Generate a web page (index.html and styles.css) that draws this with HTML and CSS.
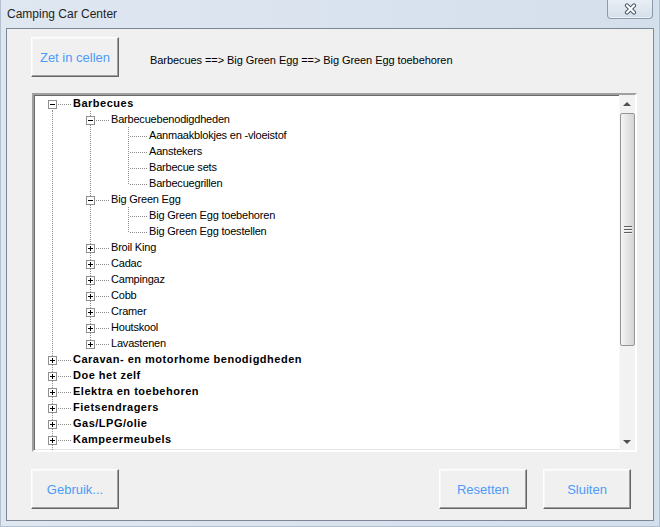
FILE: index.html
```html
<!DOCTYPE html>
<html>
  <head>
    <title>Camping Car Center</title>
    <meta name="viewport" content="width=device-width, initial-scale=1" />
    <link rel="stylesheet" href="styles.css">
  </head>

  <body>
    <div class="window">
      <div class="titlebar">
        <span class="title">Camping Car Center</span>
        <div class="close">
          <svg width="15" height="12" viewBox="0 0 15 12">
            <path d="M4 2.5 L11 9.5 M11 2.5 L4 9.5" stroke="#4b5867" stroke-width="4.2" stroke-linecap="round" fill="none" />
            <path d="M4 2.5 L11 9.5 M11 2.5 L4 9.5" stroke="#ffffff" stroke-width="2.2" stroke-linecap="round" fill="none" />
          </svg>
        </div>
      </div>

      <div class="client">
        <div class="top-row">
          <button class="btn">Zet in cellen</button>
          <span class="path">Barbecues ==&gt; Big Green Egg ==&gt; Big Green Egg toebehoren</span>
        </div>

        <div class="tree-box">
          <div class="tree">
            <div class="row"><span class="cell first"><span class="exp minus"></span></span><span class="label root">Barbecues</span></div>
            <div class="row"><span class="cell pipe"></span><span class="cell tee"><span class="exp minus"></span></span><span class="label">Barbecuebenodigdheden</span></div>
            <div class="row"><span class="cell pipe"></span><span class="cell pipe"></span><span class="cell tee leaf"></span><span class="label">Aanmaakblokjes en -vloeistof</span></div>
            <div class="row"><span class="cell pipe"></span><span class="cell pipe"></span><span class="cell tee leaf"></span><span class="label">Aanstekers</span></div>
            <div class="row"><span class="cell pipe"></span><span class="cell pipe"></span><span class="cell tee leaf"></span><span class="label">Barbecue sets</span></div>
            <div class="row"><span class="cell pipe"></span><span class="cell pipe"></span><span class="cell elbow leaf"></span><span class="label">Barbecuegrillen</span></div>
            <div class="row"><span class="cell pipe"></span><span class="cell tee"><span class="exp minus"></span></span><span class="label">Big Green Egg</span></div>
            <div class="row"><span class="cell pipe"></span><span class="cell pipe"></span><span class="cell tee leaf"></span><span class="label">Big Green Egg toebehoren</span></div>
            <div class="row"><span class="cell pipe"></span><span class="cell pipe"></span><span class="cell elbow leaf"></span><span class="label">Big Green Egg toestellen</span></div>
            <div class="row"><span class="cell pipe"></span><span class="cell tee"><span class="exp plus"></span></span><span class="label">Broil King</span></div>
            <div class="row"><span class="cell pipe"></span><span class="cell tee"><span class="exp plus"></span></span><span class="label">Cadac</span></div>
            <div class="row"><span class="cell pipe"></span><span class="cell tee"><span class="exp plus"></span></span><span class="label">Campingaz</span></div>
            <div class="row"><span class="cell pipe"></span><span class="cell tee"><span class="exp plus"></span></span><span class="label">Cobb</span></div>
            <div class="row"><span class="cell pipe"></span><span class="cell tee"><span class="exp plus"></span></span><span class="label">Cramer</span></div>
            <div class="row"><span class="cell pipe"></span><span class="cell tee"><span class="exp plus"></span></span><span class="label">Houtskool</span></div>
            <div class="row"><span class="cell pipe"></span><span class="cell elbow"><span class="exp plus"></span></span><span class="label">Lavastenen</span></div>
            <div class="row"><span class="cell tee"><span class="exp plus"></span></span><span class="label root">Caravan- en motorhome benodigdheden</span></div>
            <div class="row"><span class="cell tee"><span class="exp plus"></span></span><span class="label root">Doe het zelf</span></div>
            <div class="row"><span class="cell tee"><span class="exp plus"></span></span><span class="label root">Elektra en toebehoren</span></div>
            <div class="row"><span class="cell tee"><span class="exp plus"></span></span><span class="label root">Fietsendragers</span></div>
            <div class="row"><span class="cell tee"><span class="exp plus"></span></span><span class="label root">Gas/LPG/olie</span></div>
            <div class="row"><span class="cell tee"><span class="exp plus"></span></span><span class="label root">Kampeermeubels</span></div>
            <div class="row"><span class="cell tee"><span class="exp plus"></span></span><span class="label root">Kampeerartikelen</span></div>
          </div>
          <div class="scrollbar">
            <div class="arrow up"></div>
            <div class="track">
              <div class="thumb"><span class="grip"></span></div>
            </div>
            <div class="arrow down"></div>
          </div>
        </div>

        <div class="bottom-row">
          <button class="btn">Gebruik...</button>
          <button class="btn push">Resetten</button>
          <button class="btn">Sluiten</button>
        </div>
      </div>
    </div>
  </body>
</html>
```

FILE: styles.css
```css
*,
*:before,
*:after {
  box-sizing: border-box;
}

body {
  margin: 0;
  padding: 0;
  font-family: "Liberation Sans", Arial, sans-serif;
  background: #d8e2ee;
}

.window {
  width: 660px;
  height: 527px;
  display: flex;
  flex-direction: column;
  background: linear-gradient(to right, #dfe7f1, #d4dfec);
  box-shadow: inset 1px 0 #b3c0cf, inset -1px 0 #b3c0cf, inset 0 -1px #b3c0cf;
}

.titlebar {
  height: 28px;
  display: flex;
  align-items: flex-start;
  padding-left: 7px;
}

.title {
  font-size: 12px;
  line-height: 28px;
  color: #1e1e1e;
}

.close {
  margin-left: auto;
  margin-right: 7px;
  width: 46px;
  height: 19px;
  border: 1px solid #8d9aab;
  border-top: none;
  border-radius: 0 0 4px 4px;
  background: linear-gradient(#e8eef5, #d5dfea);
  box-shadow: inset 0 -1px #eef3f8;
  display: flex;
  align-items: center;
  justify-content: center;
  padding-bottom: 1px;
}

.client {
  flex: 1;
  margin: 0 6px 6px;
  border: 1px solid #7d8795;
  background: #f0f0f0;
  padding: 8px 16px 0 24px;
}

.top-row {
  display: flex;
  height: 40px;
}

.btn {
  width: 88px;
  height: 40px;
  padding: 0;
  border: 1px solid;
  border-color: #ffffff #646464 #646464 #ffffff;
  box-shadow: inset -1px -1px #a0a0a0, inset 1px 1px #f7f7f7;
  background: #f0f0f0;
  color: #4d9bf8;
  font-family: "Liberation Sans", Arial, sans-serif;
  font-size: 13px;
}

.path {
  align-self: flex-start;
  margin-top: 16px;
  margin-left: 31px;
  font-size: 11px;
  line-height: 14px;
  letter-spacing: -0.07px;
  color: #000;
}

.tree-box {
  margin-top: 16px;
  margin-left: 1px;
  width: 605px;
  height: 359px;
  display: flex;
  background: #fff;
  border: 2px solid;
  border-color: #a0a0a0 #ffffff #ffffff #a0a0a0;
  box-shadow: inset 1px 1px #696969, inset -1px -1px #e3e3e3;
}

.tree {
  flex: 1;
  overflow: hidden;
  --vdots: repeating-linear-gradient(to bottom, #8c8c8c 0 1px, transparent 1px 2px);
  --hdots: repeating-linear-gradient(to right, #8c8c8c 0 1px, transparent 1px 2px);
}

.row {
  display: flex;
  height: 16px;
}

.cell {
  width: 38px;
  height: 16px;
  flex-shrink: 0;
}

.cell.pipe {
  background: var(--vdots) 18px 0 / 1px 16px no-repeat;
}

.cell.tee {
  background: var(--vdots) 18px 0 / 1px 16px no-repeat,
    var(--hdots) 20px 9px / 18px 1px no-repeat;
}

.cell.elbow {
  background: var(--vdots) 18px 0 / 1px 9px no-repeat,
    var(--hdots) 20px 9px / 18px 1px no-repeat;
}

.cell.first {
  background: var(--vdots) 18px 9px / 1px 7px no-repeat,
    var(--hdots) 20px 9px / 18px 1px no-repeat;
}

.exp {
  display: block;
  width: 9px;
  height: 9px;
  margin: 5px 0 0 14px;
  border: 1px solid #8f8f8f;
}

.exp.minus {
  background: linear-gradient(#000, #000) center / 5px 1px no-repeat, #fff;
}

.exp.plus {
  background: linear-gradient(#000, #000) center / 5px 1px no-repeat,
    linear-gradient(#000, #000) center / 1px 5px no-repeat, #fff;
}

.label {
  font-size: 11px;
  line-height: 16px;
  padding-left: 1px;
  letter-spacing: -0.2px;
  color: #000;
  white-space: nowrap;
}

.label.root {
  font-weight: bold;
  letter-spacing: 0.5px;
}

.scrollbar {
  width: 16px;
  display: flex;
  flex-direction: column;
  background: #f2f2f2;
  box-shadow: inset 1px 0 #f9f9f9;
}

.arrow {
  height: 17px;
  display: flex;
  align-items: center;
  justify-content: center;
}

.arrow.up:before {
  content: "";
  border-left: 4px solid transparent;
  border-right: 4px solid transparent;
  border-bottom: 4px solid #505050;
}

.arrow.down:before {
  content: "";
  border-left: 4px solid transparent;
  border-right: 4px solid transparent;
  border-top: 4px solid #505050;
}

.track {
  flex: 1;
}

.thumb {
  height: 233px;
  margin: 1px 0 0 1px;
  width: 15px;
  border: 1px solid #959595;
  border-radius: 2px;
  background: linear-gradient(to right, #f4f4f4, #e6e6e6 45%, #d4d4d4);
  display: flex;
  align-items: center;
  justify-content: center;
}

.grip {
  width: 8px;
  height: 8px;
  background: repeating-linear-gradient(to bottom, #5c5c5c 0 1px, #f8f8f8 1px 2px, transparent 2px 3px);
}

.bottom-row {
  display: flex;
  margin-top: 17px;
  padding-right: 6px;
}

.bottom-row .push {
  margin-left: auto;
  margin-right: 16px;
}
```
